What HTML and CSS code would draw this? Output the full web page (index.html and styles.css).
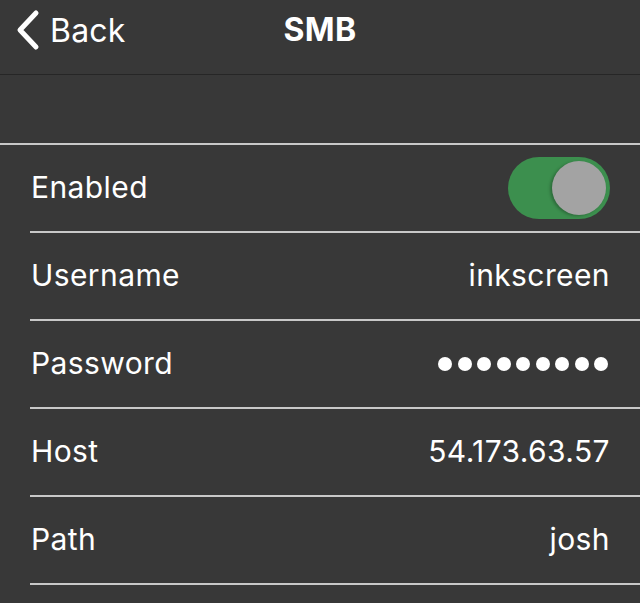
FILE: index.html
```html
<!DOCTYPE html>
<html>
<head>
<meta charset="utf-8">
<link rel="stylesheet" href="styles.css">
</head>
<body>
<div class="screen">
  <header class="nav">
    <div class="back">
      <svg class="chev" width="26" height="42" viewBox="0 0 26 42"><path d="M21 4 L5 21 L21 38" fill="none" stroke="#fff" stroke-width="5" stroke-linecap="round" stroke-linejoin="round"/></svg>
      <span class="back-label">Back</span>
    </div>
    <div class="title">SMB</div>
  </header>
  <div class="gap"></div>
  <ul class="list">
    <li class="row"><span class="label">Enabled</span>
      <span class="toggle"><span class="thumb"></span></span></li>
    <li class="row"><span class="label">Username</span><span class="value">inkscreen</span></li>
    <li class="row"><span class="label">Password</span><span class="dots"><i></i><i></i><i></i><i></i><i></i><i></i><i></i><i></i><i></i></span></li>
    <li class="row"><span class="label">Host</span><span class="value">54.173.63.57</span></li>
    <li class="row"><span class="label">Path</span><span class="value">josh</span></li>
  </ul>
</div>
</body>
</html>
```
FILE: styles.css
```css
html, body {
  margin: 0;
  padding: 0;
  background: #383838;
}
.screen {
  width: 640px;
  height: 603px;
  overflow: hidden;
  background: #383838;
  font-family: Inter, "Liberation Sans", sans-serif;
  color: #fff;
}
.nav {
  height: 74px;
  border-bottom: 1px solid #262626;
  position: relative;
  display: flex;
  align-items: center;
}
.back {
  display: flex;
  align-items: center;
  padding-left: 15px;
  height: 60px;
  margin-top: -14px;
}
.chev { display: block; }
.back-label {
  font-size: 32px;
  margin-left: 9px;
  letter-spacing: 0.2px;
}
.title {
  position: absolute;
  left: 0; right: 0;
  top: 10px;
  text-align: center;
  font-size: 32px;
  font-weight: 700;
  letter-spacing: 0.3px;
}
.gap {
  height: 68px;
  border-bottom: 2px solid #c8c8c8;
}
.list {
  list-style: none;
  margin: 0;
  padding: 0 0 0 30px;
}
.row {
  height: 86px;
  border-bottom: 2px solid #c8c8c8;
  display: flex;
  align-items: center;
  justify-content: space-between;
  padding-right: 30px;
}
.label {
  font-size: 30px;
  letter-spacing: 0.4px;
  padding-left: 1px;
  margin-top: -2px;
}
.value {
  font-size: 30px;
  letter-spacing: 0.4px;
  margin-top: -2px;
}
.toggle {
  width: 102px;
  height: 62px;
  border-radius: 31px;
  background: #3c8f4e;
  position: relative;
}
.thumb {
  position: absolute;
  right: 4px;
  top: 4px;
  width: 54px;
  height: 54px;
  border-radius: 50%;
  background: #a3a3a3;
  box-shadow: -2px 1px 3px rgba(0,0,0,0.25);
}
.dots {
  display: flex;
  gap: 5.5px;
  margin-right: 2px;
}
.dots i {
  display: block;
  width: 14px;
  height: 14px;
  border-radius: 50%;
  background: #fff;
}
```
